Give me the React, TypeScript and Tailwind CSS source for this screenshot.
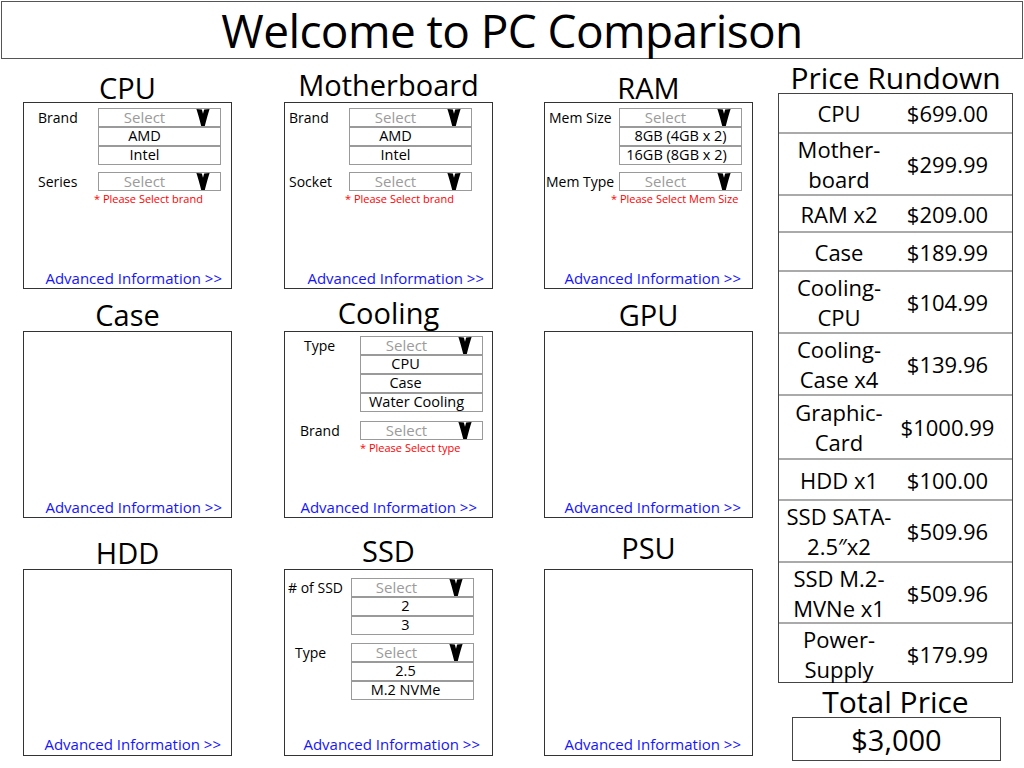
import React from 'react'

type Opt = { t: string; p?: string }

function Chevron() {
  return (
    <svg width="14" height="17" viewBox="0 0 14 18" className="absolute right-[10px] top-0">
      <path d="M0 0 Q3 0 5.8 0.5 L7 5 L8.2 0.5 Q11 0 14 0 Q12 6 8.9 18 L5.1 18 Q2 6 0 0 Z" fill="#000" />
    </svg>
  )
}

function Field({
  label,
  labelCls,
  options = [],
  selPad = 'pr-[30px]',
  className = '',
}: {
  label: string
  labelCls: string
  options?: Opt[]
  selPad?: string
  className?: string
}) {
  return (
    <div className={`flex ${className}`}>
      <div className={`shrink-0 h-[19px] flex items-center text-[14px] text-black whitespace-nowrap ${labelCls}`}>
        {label}
      </div>
      <div className="w-[123px] flex flex-col">
        <div
          className={`relative h-[19px] border border-[#9a9a9a] flex items-center justify-center text-[15px] text-[#9b9b9b] leading-none ${selPad}`}
        >
          Select
          <Chevron />
        </div>
        {options.map(o => (
          <div
            key={o.t}
            className={`h-[20px] -mt-px border border-t-2 border-[#9a9a9a] flex items-center justify-center text-[14.5px] text-black leading-none whitespace-nowrap ${o.p ?? 'pr-[30px]'}`}
          >
            {o.t}
          </div>
        ))}
      </div>
    </div>
  )
}

function Warn({ text, cls }: { text: string; cls: string }) {
  return <div className={`text-[11px] leading-[13px] text-[#ff0000] mt-[1px] whitespace-nowrap ${cls}`}>{text}</div>
}

function Panel({
  title,
  titleCls,
  linkCls,
  children,
}: {
  title: string
  titleCls: string
  linkCls: string
  children?: React.ReactNode
}) {
  return (
    <div className="flex flex-col w-[209px]">
      <div className={`flex items-end justify-center ${titleCls}`}>
        <span className="text-[29px] leading-none text-black">{title}</span>
      </div>
      <div className="h-[187px] shrink-0 border border-[#333] flex flex-col overflow-hidden">
        {children}
        <div className={`mt-auto text-right text-[15px] leading-[18px] text-[#1414ff] whitespace-nowrap ${linkCls}`}>
          Advanced Information &gt;&gt;
        </div>
      </div>
    </div>
  )
}

const prices: { label: string[]; price: string; h: string }[] = [
  { label: ['CPU'], price: '$699.00', h: 'h-[38px]' },
  { label: ['Mother-', 'board'], price: '$299.99', h: 'h-[62px]' },
  { label: ['RAM x2'], price: '$209.00', h: 'h-[37px]' },
  { label: ['Case'], price: '$189.99', h: 'h-[39px]' },
  { label: ['Cooling-', 'CPU'], price: '$104.99', h: 'h-[62px]' },
  { label: ['Cooling-', 'Case x4'], price: '$139.96', h: 'h-[62px]' },
  { label: ['Graphic-', 'Card'], price: '$1000.99', h: 'h-[64px]' },
  { label: ['HDD x1'], price: '$100.00', h: 'h-[41px]' },
  { label: ['SSD SATA-', '2.5″x2'], price: '$509.96', h: 'h-[62px]' },
  { label: ['SSD M.2-', 'MVNe x1'], price: '$509.96', h: 'h-[61px]' },
  { label: ['Power-', 'Supply'], price: '$179.99', h: 'h-[60px]' },
]

export default function App() {
  return (
    <div className="w-[1024px] h-[768px] bg-white overflow-hidden font-['Open_Sans',sans-serif] text-black">
      {/* Header */}
      <div className="ml-px mt-px w-[1022px] h-[58px] border border-[#555] flex items-center justify-center">
        <span className="text-[46px] leading-[56px] tracking-[-0.6px]">Welcome to PC Comparison</span>
      </div>

      <div className="flex">
        {/* Component panels */}
        <div className="pl-[23px] grid grid-cols-[261px_260px_209px] grid-rows-[230px_229px_238px]">
          {/* Row 1 */}
          <Panel title="CPU" titleCls="h-[43px] shrink-0" linkCls="pr-[9px] pb-[1px]">
            <Field
              className="mt-[5px]"
              label="Brand"
              labelCls="w-[74px] pl-[14px]"
              options={[{ t: 'AMD' }, { t: 'Intel' }]}
            />
            <Field className="mt-[7px]" label="Series" labelCls="w-[74px] pl-[14px]" />
            <Warn text="* Please Select brand" cls="ml-[70px]" />
          </Panel>
          <Panel title="Motherboard" titleCls="h-[43px] shrink-0 pb-[3px]" linkCls="pr-[8px] pb-[1px]">
            <Field
              className="mt-[5px]"
              label="Brand"
              labelCls="w-[64px] pl-[4px]"
              options={[{ t: 'AMD' }, { t: 'Intel' }]}
            />
            <Field className="mt-[7px]" label="Socket" labelCls="w-[64px] pl-[4px]" />
            <Warn text="* Please Select brand" cls="ml-[60px]" />
          </Panel>
          <Panel title="RAM" titleCls="h-[43px] shrink-0" linkCls="pr-[11px] pb-[1px]">
            <Field
              className="mt-[5px]"
              label="Mem Size"
              labelCls="w-[74px] pl-[4px]"
              options={[
                { t: '8GB (4GB x 2)', p: 'pr-0' },
                { t: '16GB (8GB x 2)', p: 'pr-[8px]' },
              ]}
            />
            <Field className="mt-[7px]" label="Mem Type" labelCls="w-[74px] pl-[1px]" />
            <Warn text="* Please Select Mem Size" cls="ml-[66px]" />
          </Panel>

          {/* Row 2 */}
          <Panel title="Case" titleCls="h-[42px] shrink-0 pb-[2px]" linkCls="pr-[9px] pb-[1px]" />
          <Panel title="Cooling" titleCls="h-[42px] shrink-0 pb-[4px]" linkCls="pr-[15px] pb-[1px]">
            <Field
              className="mt-[4px]"
              label="Type"
              labelCls="w-[75px] pl-[19px]"
              options={[{ t: 'CPU', p: 'pr-[32px]' }, { t: 'Case', p: 'pr-[32px]' }, { t: 'Water Cooling', p: 'pr-[10px]' }]}
            />
            <Field className="mt-[9px]" label="Brand" labelCls="w-[75px] pl-[15px]" />
            <Warn text="* Please Select type" cls="ml-[75px]" />
          </Panel>
          <Panel title="GPU" titleCls="h-[42px] shrink-0 pb-[2px]" linkCls="pr-[11px] pb-[1px]" />

          {/* Row 3 */}
          <Panel title="HDD" titleCls="h-[51px] shrink-0 pb-[2px]" linkCls="pr-[10px] pb-[2px]" />
          <Panel title="SSD" titleCls="h-[51px] shrink-0 pb-[4px]" linkCls="pr-[12px] pb-[2px]">
            <Field
              className="mt-[8px]"
              label="# of SSD"
              labelCls="w-[66px] pl-[3px]"
              selPad="pr-[32px]"
              options={[{ t: '2', p: 'pr-[14px]' }, { t: '3', p: 'pr-[14px]' }]}
            />
            <Field
              className="mt-[8px]"
              label="Type"
              labelCls="w-[66px] pl-[10px]"
              selPad="pr-[32px]"
              options={[{ t: '2.5', p: 'pr-[14px]' }, { t: 'M.2 NVMe', p: 'pr-[14px]' }]}
            />
          </Panel>
          <Panel title="PSU" titleCls="h-[51px] shrink-0 pb-[7px]" linkCls="pr-[11px] pb-[2px]" />
        </div>

        {/* Price rundown */}
        <div className="ml-[25px] w-[235px] flex flex-col">
          <div className="h-[34px] flex items-end justify-center">
            <span className="text-[30px] leading-none">Price Rundown</span>
          </div>
          <div className="border border-[#444]">
            {prices.map((r, i) => (
              <div
                key={i}
                className={`grid grid-cols-[120px_1fr] items-center ${r.h} ${i > 0 ? 'border-t-2 border-[#aaaaaa]' : ''}`}
              >
                <div className="flex flex-col items-center text-[22px] leading-[30px] whitespace-nowrap">
                  {r.label.map(l => (
                    <span key={l}>{l}</span>
                  ))}
                </div>
                <div className="text-center text-[22px] leading-none pr-[16px] whitespace-nowrap">{r.price}</div>
              </div>
            ))}
          </div>
          <div className="h-[34px] flex items-end justify-center">
            <span className="text-[30px] leading-none">Total Price</span>
          </div>
          <div className="ml-[14px] w-[209px] h-[44px] border border-[#444] flex items-center justify-center">
            <span className="text-[29px] leading-none">$3,000</span>
          </div>
        </div>
      </div>
    </div>
  )
}
